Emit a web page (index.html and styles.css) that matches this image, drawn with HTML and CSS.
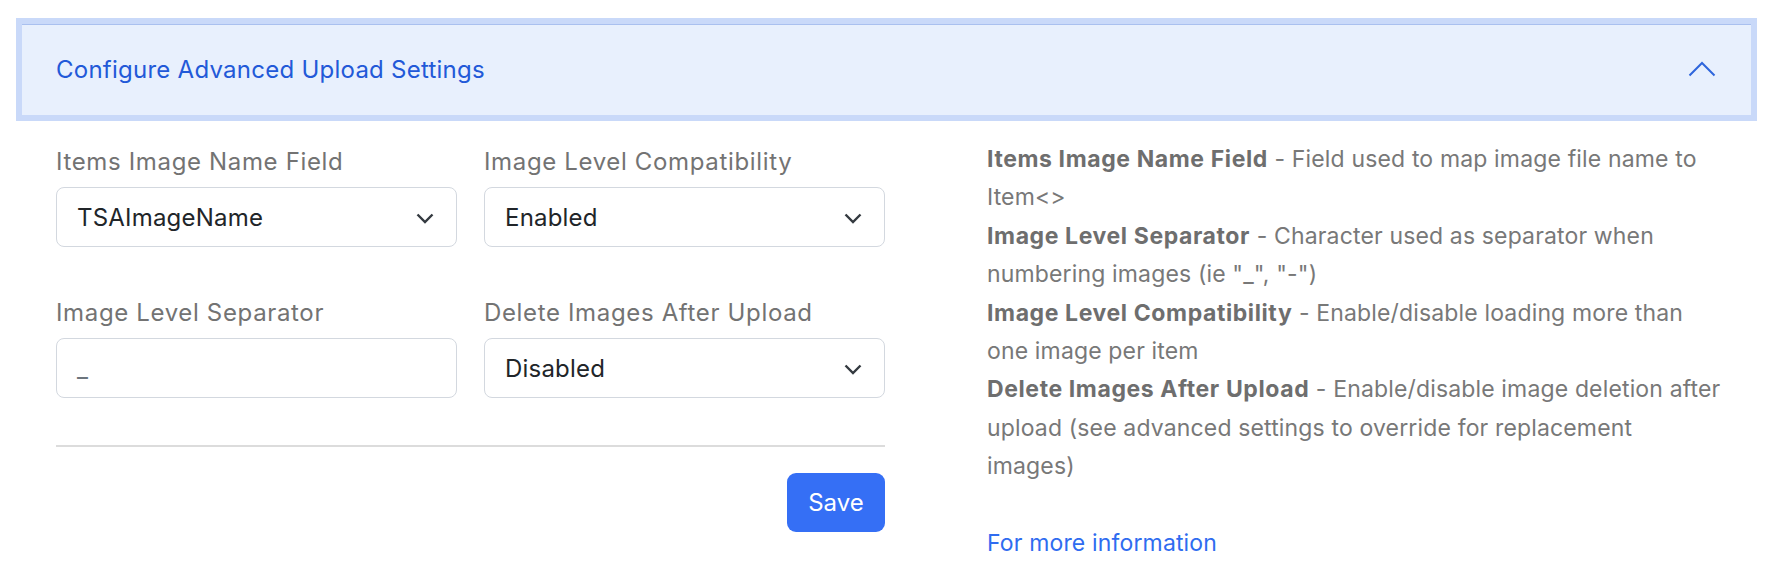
FILE: index.html
```html
<!DOCTYPE html>
<html lang="en">
<head>
<meta charset="utf-8">
<title>Configure Advanced Upload Settings</title>
<link rel="stylesheet" href="styles.css">
</head>
<body>
<div class="page">
  <div class="acc-header">
    <span class="acc-title">Configure Advanced Upload Settings</span>
    <svg class="acc-chevron" width="28" height="16" viewBox="0 0 28 16" aria-hidden="true">
      <path d="M1.5 14.5 L14 2 L26.5 14.5" fill="none" stroke="#2f66dc" stroke-width="2"/>
    </svg>
  </div>
  <div class="acc-body">
    <div class="form-col">
      <div class="fields">
        <div class="field">
          <label class="label">Items Image Name Field</label>
          <div class="select"><span>TSAImageName</span>
            <svg class="caret" width="18" height="11" viewBox="0 0 18 11" aria-hidden="true"><path d="M1.5 1.5 L9 9 L16.5 1.5" fill="none" stroke="#343a40" stroke-width="2.4"/></svg>
          </div>
        </div>
        <div class="field">
          <label class="label">Image Level Compatibility</label>
          <div class="select"><span>Enabled</span>
            <svg class="caret" width="18" height="11" viewBox="0 0 18 11" aria-hidden="true"><path d="M1.5 1.5 L9 9 L16.5 1.5" fill="none" stroke="#343a40" stroke-width="2.4"/></svg>
          </div>
        </div>
        <div class="field">
          <label class="label">Image Level Separator</label>
          <div class="input"><span>_</span></div>
        </div>
        <div class="field">
          <label class="label">Delete Images After Upload</label>
          <div class="select"><span>Disabled</span>
            <svg class="caret" width="18" height="11" viewBox="0 0 18 11" aria-hidden="true"><path d="M1.5 1.5 L9 9 L16.5 1.5" fill="none" stroke="#343a40" stroke-width="2.4"/></svg>
          </div>
        </div>
      </div>
      <div class="divider"></div>
      <div class="actions"><button class="btn">Save</button></div>
    </div>
    <div class="help">
      <p><b>Items Image Name Field</b> - Field used to map image file name to<br>Item&lt;&gt;</p>
      <p><b>Image Level Separator</b> - Character used as separator when<br>numbering images (ie "_", "-")</p>
      <p><b>Image Level Compatibility</b> - Enable/disable loading more than<br>one image per item</p>
      <p><b>Delete Images After Upload</b> - Enable/disable image deletion after<br>upload (see advanced settings to override for replacement<br>images)</p>
      <p class="more"><a href="#">For more information</a></p>
    </div>
  </div>
</div>
</body>
</html>
```

FILE: styles.css
```css
html, body {
  margin: 0;
  padding: 0;
  background: #ffffff;
}

body {
  font-family: Inter, "Noto Sans", "Liberation Sans", sans-serif;
  color: #212529;
}

.page {
  padding: 18px 17px 0 16px;
}

.acc-header {
  height: 91px;
  border: 6px solid #c9d9f9;
  background: #e8f0fd;
  box-shadow: inset 0 1px 0 #a9c0ef;
  display: flex;
  align-items: center;
  justify-content: space-between;
  padding: 0 35px 0 34px;
}

.acc-title {
  font-size: 24px;
  color: #2259d8;
  letter-spacing: 0.25px;
}

.acc-chevron {
  display: block;
  margin-top: -2px;
}

.acc-body {
  display: flex;
  padding-left: 40px;
}

.form-col {
  width: 829px;
  flex: none;
  padding-top: 23px;
}

.fields {
  display: grid;
  grid-template-columns: 401px 401px;
  column-gap: 27px;
  row-gap: 48px;
}

.label {
  display: block;
  font-size: 24px;
  line-height: 36px;
  color: #737373;
  letter-spacing: 0.65px;
  margin-bottom: 7px;
}

.select, .input {
  box-sizing: border-box;
  height: 60px;
  border: 1.5px solid #d3d8df;
  border-radius: 8px;
  background: #fff;
  display: flex;
  align-items: center;
  justify-content: space-between;
  padding: 0 22px 0 20px;
  font-size: 24px;
  letter-spacing: 0.2px;
  color: #212529;
}

.input span {
  color: #6c757d;
}

.caret {
  display: block;
  margin-top: 2px;
}

.divider {
  height: 1.5px;
  background: #dcdcdc;
  margin-top: 47px;
}

.actions {
  display: flex;
  justify-content: flex-end;
  margin-top: 26px;
}

.btn {
  width: 98px;
  height: 59px;
  border: none;
  border-radius: 9px;
  background: #356ff5;
  color: #ffffff;
  font-family: Inter, "Noto Sans", "Liberation Sans", sans-serif;
  font-size: 24px;
  padding: 0;
}

.help {
  width: 780px;
  margin-left: 102px;
  padding-top: 19px;
  font-size: 23px;
  line-height: 38.4px;
  color: #787878;
  letter-spacing: 0.15px;
  white-space: nowrap;
}

.help p {
  margin: 0;
}

.help b {
  font-weight: 700;
  color: #6e6e6e;
  letter-spacing: 0.6px;
}

.help .more {
  margin-top: 38.4px;
}

.help a {
  color: #2f6cf0;
  text-decoration: none;
}
```
